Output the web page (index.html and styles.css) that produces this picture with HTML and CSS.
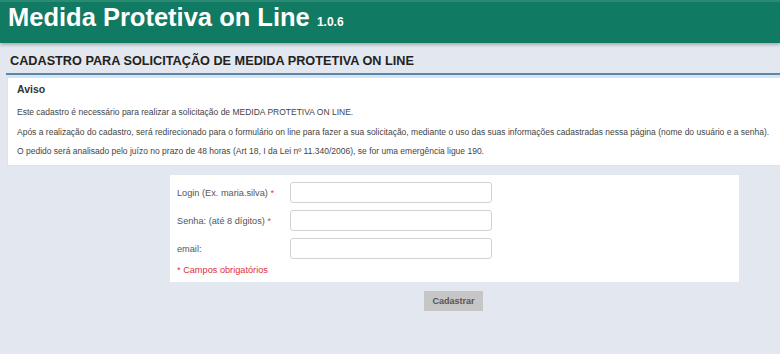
FILE: index.html
```html
<!DOCTYPE html>
<html lang="pt-BR">
<head>
<meta charset="utf-8">
<title>Medida Protetiva on Line</title>
<link rel="stylesheet" href="styles.css">
</head>
<body>
<header class="topbar">
  <h1 class="brand">Medida Protetiva on Line <span class="version">1.0.6</span></h1>
</header>
<main class="content">
  <div class="section-title">
    <h2>CADASTRO PARA SOLICITAÇÃO DE MEDIDA PROTETIVA ON LINE</h2>
  </div>
  <div class="notice">
    <h3>Aviso</h3>
    <p>Este cadastro é necessário para realizar a solicitação de MEDIDA PROTETIVA ON LINE.</p>
    <p>Após a realização do cadastro, será redirecionado para o formulário on line para fazer a sua solicitação, mediante o uso das suas informações cadastradas nessa página (nome do usuário e a senha).</p>
    <p>O pedido será analisado pelo juízo no prazo de 48 horas (Art 18, I da Lei nº 11.340/2006), se for uma emergência ligue 190.</p>
  </div>
  <form class="form-box">
    <div class="row"><label>Login (Ex. maria.silva) <span class="req">*</span></label><input type="text"></div>
    <div class="row"><label>Senha: (até 8 dígitos) <span class="req">*</span></label><input type="password"></div>
    <div class="row last"><label>email:</label><input type="text"></div>
    <p class="required-note">* Campos obrigatórios</p>
  </form>
  <div class="actions"><button type="button" class="btn">Cadastrar</button></div>
</main>
</body>
</html>
```
FILE: styles.css
```css
* { box-sizing: border-box; }
html, body { margin: 0; padding: 0; }
body {
  background: #e3e7ef;
  font-family: "Liberation Sans", Arial, sans-serif;
  color: #333;
  width: 780px;
  height: 354px;
  overflow: hidden;
}
.topbar {
  height: 43px;
  background: #117a62;
  border-top: 2px solid #2a8a73;
  box-shadow: 0 2px 3px rgba(0,0,0,0.25);
  padding-left: 8px;
}
.brand {
  margin: 0;
  color: #fff;
  font-size: 25.5px;
  font-weight: bold;
  line-height: 30px;
  white-space: nowrap;
}
.version {
  font-size: 12px;
  font-weight: bold;
}
.section-title {
  margin: 3px 0 0 6px;
  padding: 6px 0 3px 4px;
  border-bottom: 2px solid #5c87aa;
  box-shadow: 0 2px 0 #d3e6f5;
}
.section-title h2 {
  margin: 0;
  font-size: 12.7px;
  font-weight: bold;
  color: #222;
  line-height: 18px;
  white-space: nowrap;
}
.notice {
  margin: 2px 0 0 7px;
  background: #fff;
  border: 1px solid #dde3ea;
  border-right: 0;
  padding: 4px 8px 0 9px;
  height: 89px;
}
.notice h3 {
  margin: 0 0 7px;
  font-size: 10.5px;
  font-weight: bold;
  color: #333;
  line-height: 14px;
}
.notice p {
  margin: 0;
  font-size: 8.5px;
  line-height: 19.5px;
  color: #444;
  white-space: nowrap;
}
.form-box {
  margin: 9px 41px 0 170px;
  background: #fff;
  padding: 7px 7px 0 7px;
  height: 107px;
}
.row {
  display: flex;
  align-items: center;
  height: 21px;
  margin-bottom: 7px;
}
.row.last { margin-bottom: 3px; }
.row label {
  width: 113px;
  font-size: 9.2px;
  color: #555;
  white-space: nowrap;
}
.req { color: #e23a3a; }
.row input {
  width: 202px;
  height: 21px;
  border: 1px solid #d2d2d2;
  border-radius: 3px;
  background: #fff;
  padding: 0 4px;
}
.required-note {
  margin: 0;
  font-size: 9.2px;
  line-height: 16px;
  color: #e0303a;
}
.actions {
  padding: 8px 0 0 424px;
}
.btn {
  width: 59px;
  height: 20px;
  border: 0;
  background: #c6c6c6;
  color: #555;
  font-family: "Liberation Sans", Arial, sans-serif;
  font-size: 9px;
  font-weight: bold;
  padding: 0;
}
```
